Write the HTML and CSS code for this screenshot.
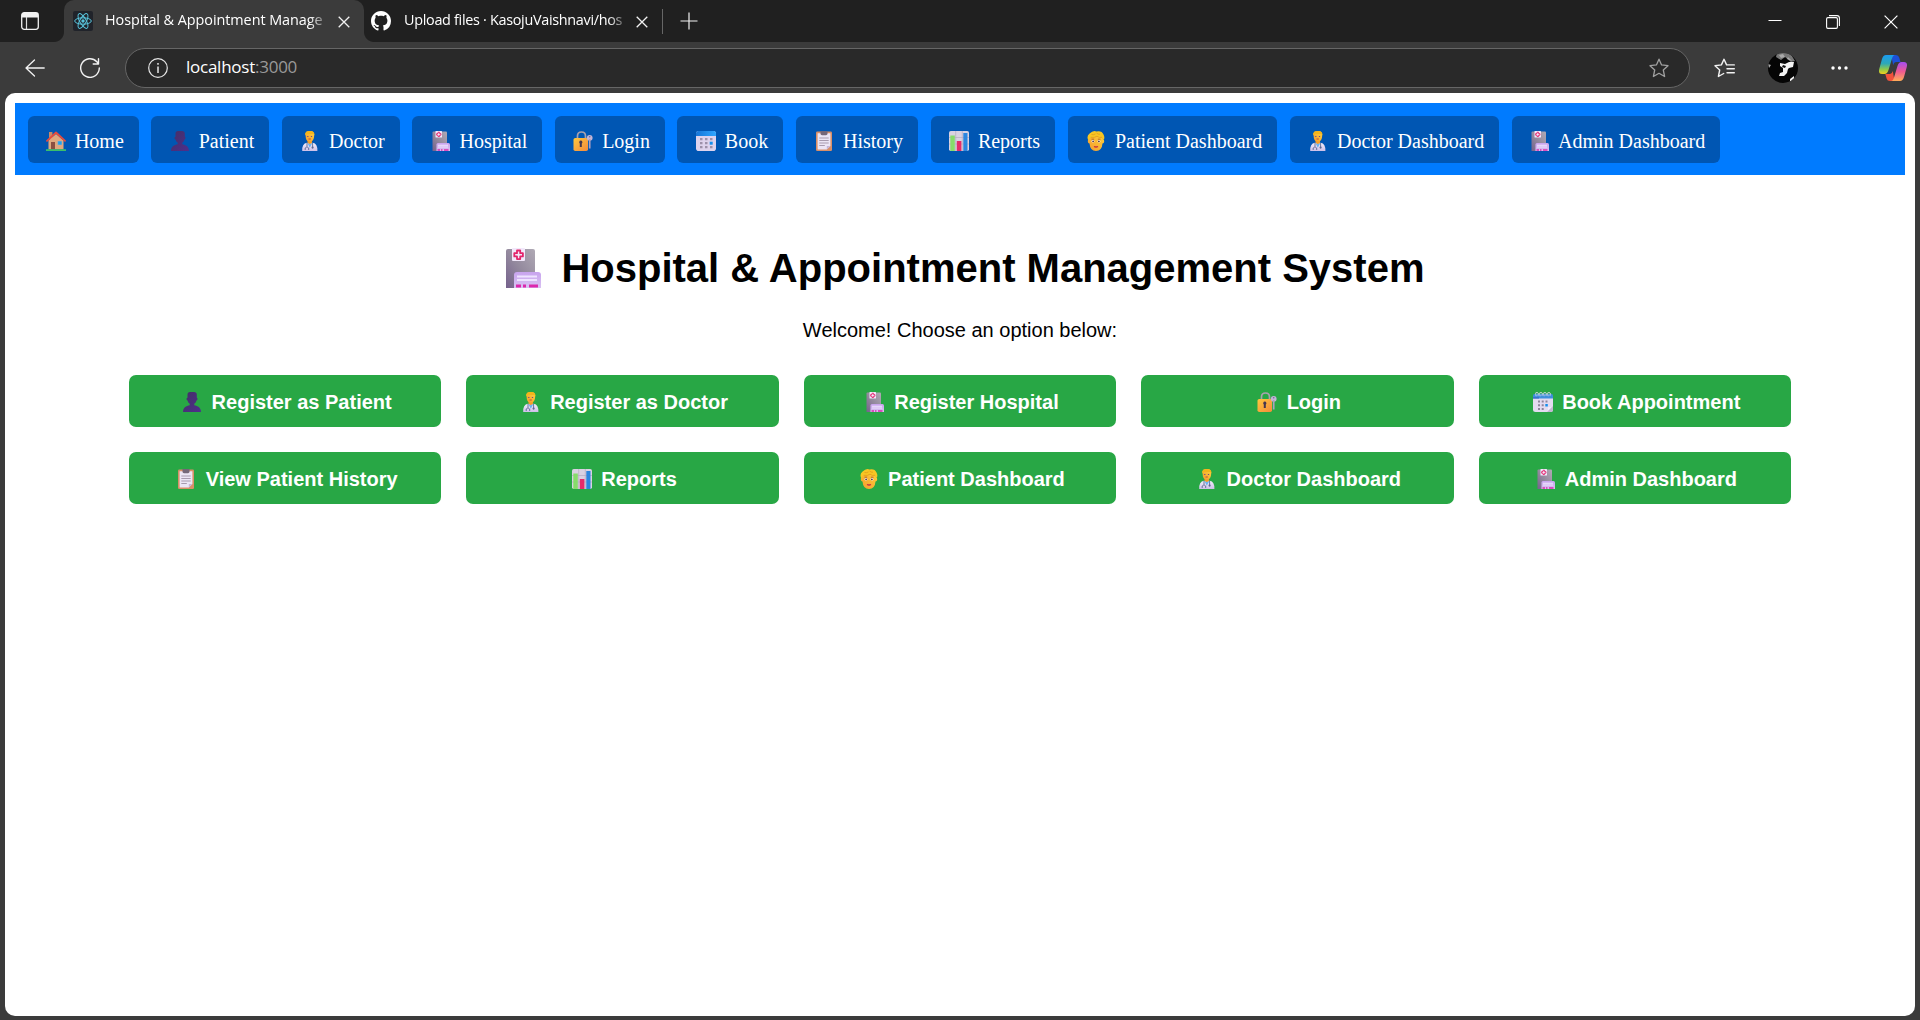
FILE: index.html
```html
<!DOCTYPE html>
<html lang="en">
<head>
<meta charset="utf-8">
<title>Hospital &amp; Appointment Management System</title>
<link rel="stylesheet" href="styles.css">
</head>
<body>
<svg class="defs" aria-hidden="true">
  <defs>
    <linearGradient id="g-wall" x1="0" x2="1" y1="1" y2="0"><stop offset="0" stop-color="#75618c"/><stop offset=".5" stop-color="#948a9e"/><stop offset="1" stop-color="#b0aab5"/></linearGradient>
    <linearGradient id="g-annex" x1="0" x2="0" y1="0" y2="1"><stop offset="0" stop-color="#c8a4ee"/><stop offset="1" stop-color="#d9c2f2"/></linearGradient>
    <linearGradient id="g-lock" x1="0" x2="1" y1="0" y2="1"><stop offset="0" stop-color="#ffc83d"/><stop offset="1" stop-color="#f48a3c"/></linearGradient>
    <linearGradient id="g-cal" x1="0" x2="1"><stop offset="0" stop-color="#1675d8"/><stop offset="1" stop-color="#2fa6ff"/></linearGradient>
    <linearGradient id="g-bust" x1="0" x2="1" y1="0" y2="1"><stop offset="0" stop-color="#443066"/><stop offset="1" stop-color="#4e2f8c"/></linearGradient>
    <linearGradient id="g-face" x1="1" x2="0" y1="0" y2="1"><stop offset="0" stop-color="#ffd43b"/><stop offset="1" stop-color="#f59a2e"/></linearGradient>
    <linearGradient id="g-coat" x1="0" x2="0" y1="0" y2="1"><stop offset="0" stop-color="#f4effa"/><stop offset="1" stop-color="#cdbfe8"/></linearGradient>
    <linearGradient id="g-cop1" x1="0" x2="0" y1="0" y2="1"><stop offset="0" stop-color="#1b9bf0"/><stop offset=".45" stop-color="#2da8b8"/><stop offset=".75" stop-color="#8fc94a"/><stop offset="1" stop-color="#f2cf1d"/></linearGradient>
    <linearGradient id="g-cop2" x1="0" x2="0" y1="0" y2="1"><stop offset="0" stop-color="#a44df0"/><stop offset=".5" stop-color="#ef5a92"/><stop offset="1" stop-color="#ffad58"/></linearGradient>
    <symbol id="home" viewBox="0 0 20 20">
      <path fill="#c98a67" d="M3 1h3.400v7H3z"/><path fill="#dfa87e" d="M2.500 9.500 10 3l7.500 6.500V18.500h-15z"/>
      <path fill="none" stroke="#e84b3c" stroke-width="1.800" stroke-linejoin="round" stroke-linecap="round" d="m1 9.800 9-8.300 9 8.300"/>
      <path fill="#8b4f42" d="M5 11h4v7.500H5z"/><path fill="#1aa4ee" stroke="#c9a9a8" stroke-width=".6" d="M11.700 10h4.300v4h-4.300z"/><path fill="#3bbf6b" d="M0 18.200h20V20H0z"/>
    </symbol>
    <symbol id="patient" viewBox="0 0 20 20">
      <path fill="url(#g-bust)" d="M5.500 2.500Q5.500 0 8 0h4q2.800 0 2.800 2.500v3.300q.7 0 .7 1.200t-1 1.500q-.5 2.300-2.200 3.300v1.500c3.500.6 6.500 2 6.700 6.700H1c.2-4.700 3.200-6.100 6.700-6.700v-1.500Q6 10.800 5.500 8.500q-1-.3-1-1.500t1-1.200z"/>
    </symbol>
    <symbol id="doctor" viewBox="0 0 20 20">
      <path fill="#f39c2b" d="M7.500 8h4.500v5H7.500z"/><path fill="url(#g-face)" d="M5.500 3q0-3 4.200-3 4.800 0 4.500 4l-.3 3q-.8 3.600-4.100 3.600T5.800 7z"/>
      <path fill="#f5b51b" d="M5.200 4.600V2.200Q6 0 9 0h2.500q3.200.5 2.900 4.500l-1-1.500H7z"/>
      <path fill="#70488a" d="M7.200 5h1.200v1H7.200zm3.700 0h1.200v1h-1.200z"/><path stroke="#bd3d45" stroke-width=".9" d="M8.500 8h2.300"/>
      <path fill="url(#g-coat)" d="M2.200 20q-.4-7.500 4.800-8.300l2.800 1.500 2.900-1.500q5 .8 4.700 8.300z"/>
      <path fill="#6bb1ef" d="m7.300 11.800 2.500 5 2.700-5-2.700 1.500z"/><path fill="none" stroke="#586893" stroke-width=".9" d="M7 12v3.500M5.200 19v-2q1.800-2.500 3.500 0v2M12.600 12v4"/><circle cx="12.600" cy="16.600" r="1.100" fill="#586893"/>
    </symbol>
    <symbol id="hospital" viewBox="0 0 40 40">
      <path fill="url(#g-wall)" d="M3 3q0-2 2-2h25q2 0 2 2v37H3z"/>
      <rect x="9" width="13" height="13" rx="1" fill="#f2e8fb"/><path fill="none" stroke="#e3246b" stroke-width="1.800" stroke-linejoin="round" d="M14 2.500h3.200v2.700h2.700v3.200h-2.700v2.700H14V8.400h-2.700V5.200H14z"/>
      <path fill="url(#g-annex)" d="M11 27q0-3 3-3h21q3 0 3 3v13H11z"/><path stroke="#eee3ff" stroke-width="2" d="M14 28.500h20M14 32h20"/><path stroke="#dc28ad" stroke-width="3" d="M13 38h5m2 0h3m3 0h9"/>
    </symbol>
    <symbol id="login" viewBox="0 0 20 20">
      <path fill="none" stroke="#a9a1ad" stroke-width="1.700" d="M4.500 8V5q0-4 4-4t4 4v3"/><rect x=".5" y="7" width="14.500" height="13" rx="1.800" fill="url(#g-lock)"/>
      <path fill="#46364e" d="M7.800 9.500a1.700 1.700 0 0 1 1 3V16h-2v-3.500a1.700 1.700 0 0 1 1-3"/><circle cx="16.700" cy="6.800" r="2.900" fill="#c2b5d6"/><path stroke="#ad9fbd" stroke-width="1.700" d="M16.700 8v9.500"/><circle cx="16.700" cy="5.800" r=".8" fill="#766594"/>
    </symbol>
    <symbol id="book" viewBox="0 0 20 20">
      <rect width="20" height="20" rx="2.800" fill="#ded3ed"/><path fill="url(#g-cal)" d="M0 5V2.500Q0 0 2.500 0h15Q20 0 20 2.500V5z"/>
      <path fill="#9d91aa" d="M4 7h2.500v2.300H4zm5 0h2.500v2.300H9zm5 0h2.500v2.300H14zM4 11h2.500v2.300H4zm5 0h2.500v2.300H9zM4 15h2.500v2.300H4zm5 0h2.500v2.300H9z"/><path fill="#168fed" d="M13.700 10.700h3v3h-3z"/><path fill="#9d91aa" d="M14 15h2.500v2.300H14z"/>
    </symbol>
    <symbol id="spiral" viewBox="0 0 20 20">
      <path fill="#e3dbf0" d="M0 6h20v11.500q0 2.500-2.500 2.500h-15Q0 20 0 17.500z"/><path fill="#c3b7d2" d="M20 14v3.500q0 2.500-2.500 2.500H14z"/><path fill="#f3eefa" d="M19.500 14 14 19.500q1.500-1.500.8-4.500 3 .7 4.700-1z"/>
      <path fill="#3f8fdd" d="M0 6.500V4q0-2.200 2.200-2.200h15.600Q20 1.800 20 4v2.500z"/><path fill="#3766c4" d="M0 5.300h6v1.200H0z"/>
      <g fill="none" stroke="#d8d8df" stroke-width=".9"><path d="M3.200 4.200Q1.700 0 4 .3t1 3.500M7.200 4.200Q5.700 0 8 .3t1 3.500M11.200 4.200Q9.700 0 12 .3t1 3.500M15.200 4.200Q13.700 0 16 .3t1 3.500"/></g>
      <path fill="#8f859d" d="M5 8.500h2v2H5zm3.700 0h2v2h-2zm3.800 0h2v2h-2zM5 12.200h2v2H5zm3.700 0h2v2h-2zM5 15.900h2v2H5zm3.700 0h2v2h-2z"/><path fill="#168fed" d="M12.300 12h2.500v2.500h-2.500z"/>
    </symbol>
    <symbol id="history" viewBox="0 0 20 20">
      <rect x="2" y=".5" width="16" height="19.500" rx="1.200" fill="#d98f68"/><path fill="#ece5f5" d="M3.600 2.200h12.800V15l-3.600 3.600H3.600z"/><path fill="#c5b5d8" d="M16.400 15h-3.600v3.600z"/>
      <path fill="#756779" d="M6.500 0h7v2.500q0 1.700-1.500 1.700H8q-1.500 0-1.500-1.700z"/><path stroke="#a79aae" d="M5.300 7h9.400M5.300 9.500h9.400M5.300 12h9.400M5.300 14.500h5.500"/>
    </symbol>
    <symbol id="reports" viewBox="0 0 20 20">
      <rect width="20" height="20" rx="1.800" fill="#d9d2e2"/><path fill="none" stroke="#b5acc2" stroke-width=".7" d="M0 6.500h20M0 13h20M6.700 0v20M13.300 0v20"/><path fill="#86dc6a" d="M1.300 4.500h4.500V20H1.300z"/><path fill="#e52b69" d="M7.800 10h4.600v10H7.800z"/><path fill="#2b86df" d="M14.300 2h4.200v18h-4.200z"/>
    </symbol>
    <symbol id="person" viewBox="0 0 20 20">
      <path fill="url(#g-face)" d="M3.300 5Q4 1.500 10 1.500t6.700 4l.3 3q1.400.2 1.200 2t-1.700 2q-.6 7.500-6.500 7.500t-6.500-7.500q-1.500-.2-1.700-2t1.200-2z"/>
      <path fill="#f8c623" d="M2.300 9.500Q.2 4.800 3.600 2.500 7-1 10.500.4q5.500-1 7 3.200 1.600 2.800.2 5.700L16 6.300q-3 .7-5-1.100-2.500 1.800-6.300 1z"/><path fill="none" stroke="#dc951b" stroke-width=".7" d="M4.700 6.300q4 .7 6.300-1.100 2 1.800 5 1.100M10.500 2q1.500 1.500 3.500 1.200M5.500 3.500q2 .7 4-.6"/>
      <circle cx="7" cy="10.300" r="1.300" fill="#fff"/><circle cx="13" cy="10.300" r="1.300" fill="#fff"/><circle cx="7.100" cy="10.300" r=".9" fill="#4d2d3d"/><circle cx="12.900" cy="10.300" r=".9" fill="#4d2d3d"/><path fill="none" stroke="#a55b22" stroke-width=".8" d="M5.500 8.200h2.600m3.800 0h2.600"/><path fill="none" stroke="#c32b44" stroke-width="1.300" d="M8 15.500q2 1 4 0"/>
    </symbol>
    <symbol id="close" viewBox="0 0 12 12"><path fill="none" stroke="#f2f2f2" stroke-width="1.300" d="m.7.7 10.600 10.600m0-10.600L.7 11.300"/></symbol>
  </defs>
</svg>

<div class="browser">
  <header class="tabbar">
    <div class="tab-actions"><svg width="18" height="18" viewBox="0 0 18 18"><rect x=".7" y=".7" width="16.600" height="16.600" rx="2.500" fill="none" stroke="#f2f2f2" stroke-width="1.300"/><path fill="#f2f2f2" d="M1 1h16v4.500H1z"/><path stroke="#ddd" stroke-width="1.200" d="M5.500 5v12"/></svg></div>
    <div class="tab tab-active">
      <svg class="favicon" viewBox="0 0 20 20"><rect width="20" height="20" rx="2" fill="#20232a"/><g fill="none" stroke="#58c4dc"><ellipse cx="10" cy="10" rx="8.300" ry="3.200"/><ellipse cx="10" cy="10" rx="8.300" ry="3.200" transform="rotate(60 10 10)"/><ellipse cx="10" cy="10" rx="8.300" ry="3.200" transform="rotate(120 10 10)"/></g><circle cx="10" cy="10" r="1.700" fill="#58c4dc"/></svg>
      <span class="tab-title">Hospital &amp; Appointment Manage</span>
      <svg class="tab-close"><use href="#close"/></svg>
    </div>
    <div class="tab tab-idle">
      <svg class="favicon" viewBox="0 0 16 16"><path fill="#fff" d="M8 0C3.580 0 0 3.580 0 8c0 3.540 2.290 6.530 5.470 7.590.4.070.55-.17.55-.38 0-.19-.01-.82-.01-1.490-2.010.37-2.530-.49-2.690-.94-.09-.23-.48-.94-.82-1.130-.28-.15-.68-.52-.01-.53.63-.01 1.080.58 1.230.82.72 1.210 1.870.87 2.330.66.07-.52.28-.87.51-1.070-1.780-.2-3.640-.89-3.640-3.950 0-.87.31-1.590.82-2.150-.08-.2-.36-1.020.08-2.120 0 0 .67-.21 2.200.82.64-.18 1.320-.27 2-.27s1.360.09 2 .27c1.530-1.040 2.200-.82 2.200-.82.44 1.100.16 1.920.08 2.120.51.56.82 1.270.82 2.150 0 3.070-1.870 3.750-3.650 3.950.29.25.54.73.54 1.480 0 1.070-.01 1.930-.01 2.200 0 .21.15.46.55.38A8.010 8.010 0 0 0 16 8c0-4.420-3.580-8-8-8"/></svg>
      <span class="tab-title">Upload files · KasojuVaishnavi/hos</span>
      <svg class="tab-close"><use href="#close"/></svg>
    </div>
    <div class="tab-divider"></div>
    <svg class="new-tab" viewBox="0 0 18 18"><path stroke="#f2f2f2" stroke-width="1.200" d="M9 .5v17M.5 9h17"/></svg>
    <div class="window-controls">
      <svg width="14" height="14" viewBox="0 0 14 14"><path stroke="#fff" d="M.5 5.500h13"/></svg>
      <svg width="14" height="14" viewBox="0 0 14 14"><g fill="none" stroke="#fff" stroke-width="1.100"><rect x=".6" y="2.600" width="10.800" height="10.800" rx="1.300"/><path d="M3 .6h8q2.400 0 2.400 2.400v8"/></g></svg>
      <svg width="14" height="14" viewBox="0 0 14 14"><path stroke="#fff" stroke-width="1.200" d="m.6.600 12.800 12.800M13.400.6.600 13.400"/></svg>
    </div>
  </header>

  <div class="toolbar">
    <svg class="back" viewBox="0 0 20 18"><path fill="none" stroke="#f2f2f2" stroke-width="1.300" stroke-linecap="round" stroke-linejoin="round" d="M9.500 1 1 9l8.500 8M1.200 9h18"/></svg>
    <svg class="reload" viewBox="0 0 20 20"><path fill="none" stroke="#f2f2f2" stroke-width="1.400" stroke-linecap="round" stroke-linejoin="round" d="M19.300 10a9.300 9.300 0 1 1-2.500-6.300L18.500 6M18.500.7V6h-5.300"/></svg>
    <div class="address">
      <svg class="info" viewBox="0 0 20 20"><circle cx="10" cy="10" r="9.300" fill="none" stroke="#e6e6e6" stroke-width="1.200"/><path stroke="#e6e6e6" stroke-width="1.500" d="M10 8.500V15M10 5v1.700"/></svg>
      <span class="url">localhost<span class="port">:3000</span></span>
      <svg class="star" viewBox="0 0 20 20"><path fill="none" stroke="#a0a0a0" stroke-width="1.300" stroke-linejoin="round" d="m10 1.200 2.600 5.700 6.400.8-4.700 4.300 1.300 6.500L10 15.300l-5.600 3.200L5.700 12 1 7.700l6.400-.8z"/></svg>
    </div>
    <div class="toolbar-actions">
      <svg class="favorites" viewBox="0 0 21 20"><path fill="none" stroke="#f2f2f2" stroke-width="1.400" stroke-linejoin="round" stroke-linecap="round" d="M14 6.900h-1.400L10 1.200 7.400 6.900 1 7.700 5.700 12l-1.300 6.500 5.300-3M13 6.900h7.300M13 10.800h7.300M13 14.800h7.300"/></svg>
      <svg class="avatar" viewBox="0 0 30 30"><clipPath id="round"><circle cx="15" cy="15" r="15"/></clipPath><g clip-path="url(#round)"><path fill="#050505" d="M0 0h30v30H0z"/><path fill="#777" d="M9 0h13l5 8-4 1-6-5-4 3-5-3z"/><path fill="#aaa" d="m11 2 4-1 2 3-4 1zm9 2 4 4-5-2zM0 11l3 1-2 3z"/><path fill="#f2f2f2" d="m12 10 5 1 4-2h5l-1 5-4 1-1 1-1 4-3 3h-5l1-3 3-1v-4l-3-2zM22 26l4-3v4l-4 2z"/><path fill="#111" d="m15 12 3 1-1 2-3-1z"/></g></svg>
      <svg class="more" viewBox="0 0 17 4"><g fill="#fff"><circle cx="2" cy="2" r="1.700"/><circle cx="8.500" cy="2" r="1.700"/><circle cx="15" cy="2" r="1.700"/></g></svg>
      <svg class="copilot" viewBox="0 0 28 26"><path fill="#1d50d8" d="M12 0h5q2.500 0 3.200 2.500L21.500 7H17q-2 0-2.800 3z"/><path fill="#f0523c" d="M15.500 26H11q-2.700 0-3.400-2.500L6.300 19H11q2 0 2.800-3z"/><path fill="url(#g-cop1)" d="M7 0h9q-2 0-3 3.500L9.500 15q-1.200 4-4 4H3q-4 0-2.700-5.200L3 4q1.200-4 4-4"/><path fill="url(#g-cop2)" d="M21 26h-9q2 0 3-3.500L18.500 11q1.200-4 4-4H25q4 0 2.700 5.200L25 22q-1.200 4-4 4"/></svg>
    </div>
  </div>

  <main class="page">
    <nav class="nav">
      <a class="nav-link"><svg class="emoji"><use href="#home"/></svg> Home</a>
      <a class="nav-link"><svg class="emoji"><use href="#patient"/></svg> Patient</a>
      <a class="nav-link"><svg class="emoji"><use href="#doctor"/></svg> Doctor</a>
      <a class="nav-link"><svg class="emoji"><use href="#hospital"/></svg> Hospital</a>
      <a class="nav-link"><svg class="emoji"><use href="#login"/></svg> Login</a>
      <a class="nav-link"><svg class="emoji"><use href="#book"/></svg> Book</a>
      <a class="nav-link"><svg class="emoji"><use href="#history"/></svg> History</a>
      <a class="nav-link"><svg class="emoji"><use href="#reports"/></svg> Reports</a>
      <a class="nav-link"><svg class="emoji"><use href="#person"/></svg> Patient Dashboard</a>
      <a class="nav-link"><svg class="emoji"><use href="#doctor"/></svg> Doctor Dashboard</a>
      <a class="nav-link"><svg class="emoji"><use href="#hospital"/></svg> Admin Dashboard</a>
    </nav>
    <section class="home">
      <h1 class="title"><svg class="emoji"><use href="#hospital"/></svg> Hospital &amp; Appointment Management System</h1>
      <p class="welcome">Welcome! Choose an option below:</p>
      <div class="options">
        <a class="option"><svg class="emoji"><use href="#patient"/></svg> Register as Patient</a>
        <a class="option"><svg class="emoji"><use href="#doctor"/></svg> Register as Doctor</a>
        <a class="option"><svg class="emoji"><use href="#hospital"/></svg> Register Hospital</a>
        <a class="option"><svg class="emoji"><use href="#login"/></svg> Login</a>
        <a class="option"><svg class="emoji"><use href="#spiral"/></svg> Book Appointment</a>
        <a class="option"><svg class="emoji"><use href="#history"/></svg> View Patient History</a>
        <a class="option"><svg class="emoji"><use href="#reports"/></svg> Reports</a>
        <a class="option"><svg class="emoji"><use href="#person"/></svg> Patient Dashboard</a>
        <a class="option"><svg class="emoji"><use href="#doctor"/></svg> Doctor Dashboard</a>
        <a class="option"><svg class="emoji"><use href="#hospital"/></svg> Admin Dashboard</a>
      </div>
    </section>
  </main>
</div>
</body>
</html>
```
FILE: styles.css
```css
* { box-sizing: border-box; }
body { margin: 0; overflow: hidden; background: #3b3b3b; }
svg { display: block; flex: none; }
.defs { position: absolute; width: 0; height: 0; }

.browser { display: flex; flex-direction: column; height: 1020px; font-family: "Open Sans", "Noto Sans", sans-serif; }

.tabbar { display: flex; align-items: center; height: 42px; background: #202020; }
.tab-actions { display: flex; align-items: center; width: 64px; height: 42px; padding-left: 21px; }
.tab { display: flex; align-items: center; height: 42px; }
.tab-active { position: relative; width: 300px; padding-left: 9px; border-radius: 10px 10px 0 0; background: #3b3b3b; }
.tab-active::before,
.tab-active::after { content: ""; position: absolute; bottom: 0; width: 10px; height: 10px; }
.tab-active::before { left: -10px; background: radial-gradient(circle at 0 0, transparent 9.500px, #3b3b3b 10.500px); }
.tab-active::after { right: -10px; background: radial-gradient(circle at 100% 0, transparent 9.500px, #3b3b3b 10.500px); }
.tab-idle { width: 298px; padding-left: 7px; }
.favicon { width: 20px; height: 20px; }
.tab-title { width: 224px; margin: -2px 0 0 12px; white-space: nowrap; color: #fff; font-size: 14.400px; line-height: 22px; letter-spacing: -.05px; mask-image: linear-gradient(to right, #000 204px, transparent 226px); }
.tab-idle .tab-title { margin-left: 13px; letter-spacing: -.3px; }
.tab-close { width: 12px; height: 12px; margin: 2px 0 0 9px; }
.tab-idle .tab-close { margin-left: 8px; }
.tab-divider { width: 1px; height: 25px; background: #666; }
.new-tab { width: 18px; height: 18px; margin: -1px 0 0 17px; }
.window-controls { display: flex; gap: 44px; margin: 1px 22px 0 auto; }

.toolbar { display: flex; align-items: center; height: 51px; padding-left: 25px; background: #3b3b3b; }
.back { width: 20px; height: 18px; }
.reload { width: 20px; height: 20px; margin-left: 35px; }
.address { display: flex; align-items: center; width: 1565px; height: 40px; margin-left: 25px; padding: 0 20px 0 22px; border: 1px solid #666; border-radius: 20px; background: #292929; }
.info { width: 20px; height: 20px; }
.url { margin: -2px 0 0 18px; color: #fff; font-size: 17px; line-height: 24px; letter-spacing: -.25px; }
.port { color: #999; }
.star { width: 20px; height: 20px; margin-left: auto; }
.toolbar-actions { display: flex; align-items: center; }
.favorites { width: 21px; height: 20px; margin-left: 24px; }
.avatar { width: 30px; height: 30px; margin-left: 33px; }
.more { width: 17px; height: 4px; margin-left: 33px; }
.copilot { width: 28px; height: 26px; margin-left: 31px; }

.page { flex: 1; margin: 0 5px 4px; padding: 10px; border-radius: 10px; background: #fff; color: #000; }
.emoji { display: inline-block; width: 1em; height: 1em; margin: 0 .185em; vertical-align: -.15em; }
.nav { display: flex; gap: 12.500px; height: 72px; padding: 12.500px; background: #007bff; }
.nav-link { height: 47px; padding: 14.500px 15px 10.500px; border-radius: 6.250px; background: #0056b3; color: #fff; font: 20px/22px "Liberation Serif", serif; white-space: nowrap; }

.home { padding: 63px 114px 0; text-align: center; font-family: "Liberation Sans", sans-serif; }
.title { margin: 0; font-size: 40px; line-height: 60px; }
.welcome { margin: 17px 0 0; font-size: 20px; line-height: 30px; }
.options { display: grid; grid-template-columns: repeat(5, 1fr); gap: 25px; margin-top: 30px; }
.option { height: 52px; padding-top: 1px; border-radius: 7px; background: #28a745; color: #fff; font-size: 20px; font-weight: bold; line-height: 52px; white-space: nowrap; }
```
